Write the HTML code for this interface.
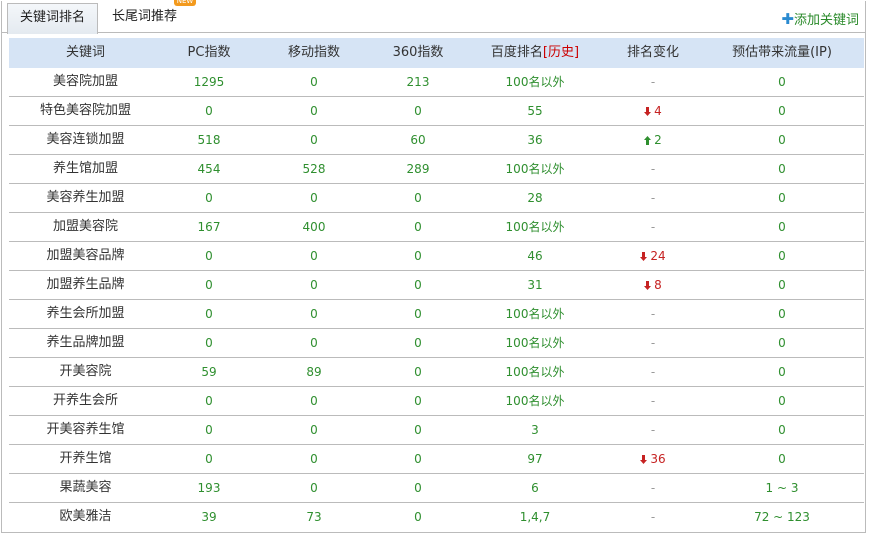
<!DOCTYPE html>
<html><head><meta charset="utf-8"><style>
body{margin:0;background:#fff;font-family:"DejaVu Sans","Noto Sans CJK SC",sans-serif;font-size:12px;color:#333}
.wrap{position:absolute;left:1px;top:1px;width:863px;height:531px;border:1px solid #bbb;border-top:none}
.bar{position:absolute;left:0;top:0;width:863px;height:31px;border-bottom:1px solid #bbb;background:#fff}
.tab1{position:absolute;left:5px;top:2px;width:89px;height:30px;border:1px solid #bbb;border-bottom:none;background:linear-gradient(#f4f7fa,#e4eaf0);text-align:center;line-height:28px;font-size:13px;color:#222}
.tab2{position:absolute;left:110px;top:2px;line-height:28px;color:#222;font-size:13px}
.new{position:absolute;left:172px;top:-4px;width:22px;height:9px;background:#f39a1e;border-radius:3px;color:#fff;font-size:7px;line-height:9px;text-align:center}
.add{position:absolute;right:6px;top:8px;color:#2a8a2a;font-size:13px}
.add b{color:#2a8ad0;font-size:15px;font-weight:bold}
table{position:absolute;left:7px;top:37px;width:855px;border-collapse:collapse}
th{background:#d6e4f5;height:30px;font-weight:normal;color:#333;padding:0;font-size:13px;line-height:30px}
td{height:28px;line-height:28px;border-bottom:1px solid #bbb;text-align:center;padding:0;vertical-align:middle}
td:first-child{font-size:13px}
.g{color:#2f8f2f}.r{color:#c62222}.d{color:#999}
svg{vertical-align:-1px;margin-right:3px}
</style></head><body>
<div class="wrap">
<div class="bar"><div class="tab1">关键词排名</div><div class="tab2">长尾词推荐</div><div class="new">NEW</div><div class="add"><b>✚</b>添加关键词</div></div>
<table>
<colgroup><col style="width:153px"><col style="width:94px"><col style="width:116px"><col style="width:92px"><col style="width:142px"><col style="width:94px"><col></colgroup>
<tr><th>关键词</th><th>PC指数</th><th>移动指数</th><th>360指数</th><th>百度排名<span style="color:#c00">[历史]</span></th><th>排名变化</th><th>预估带来流量(IP)</th></tr>
<tr><td>美容院加盟</td><td class="g">1295</td><td class="g">0</td><td class="g">213</td><td class="g">100名以外</td><td class="d">-</td><td class="g">0</td></tr>
<tr><td>特色美容院加盟</td><td class="g">0</td><td class="g">0</td><td class="g">0</td><td class="g">55</td><td class="r"><svg width="7" height="9"><path d="M2 0h3v5h2L3.5 9 0 5h2z" fill="#c62222"/></svg>4</td><td class="g">0</td></tr>
<tr><td>美容连锁加盟</td><td class="g">518</td><td class="g">0</td><td class="g">60</td><td class="g">36</td><td class="g"><svg width="7" height="9"><path d="M2 9h3V4h2L3.5 0 0 4h2z" fill="#2f8f2f"/></svg>2</td><td class="g">0</td></tr>
<tr><td>养生馆加盟</td><td class="g">454</td><td class="g">528</td><td class="g">289</td><td class="g">100名以外</td><td class="d">-</td><td class="g">0</td></tr>
<tr><td>美容养生加盟</td><td class="g">0</td><td class="g">0</td><td class="g">0</td><td class="g">28</td><td class="d">-</td><td class="g">0</td></tr>
<tr><td>加盟美容院</td><td class="g">167</td><td class="g">400</td><td class="g">0</td><td class="g">100名以外</td><td class="d">-</td><td class="g">0</td></tr>
<tr><td>加盟美容品牌</td><td class="g">0</td><td class="g">0</td><td class="g">0</td><td class="g">46</td><td class="r"><svg width="7" height="9"><path d="M2 0h3v5h2L3.5 9 0 5h2z" fill="#c62222"/></svg>24</td><td class="g">0</td></tr>
<tr><td>加盟养生品牌</td><td class="g">0</td><td class="g">0</td><td class="g">0</td><td class="g">31</td><td class="r"><svg width="7" height="9"><path d="M2 0h3v5h2L3.5 9 0 5h2z" fill="#c62222"/></svg>8</td><td class="g">0</td></tr>
<tr><td>养生会所加盟</td><td class="g">0</td><td class="g">0</td><td class="g">0</td><td class="g">100名以外</td><td class="d">-</td><td class="g">0</td></tr>
<tr><td>养生品牌加盟</td><td class="g">0</td><td class="g">0</td><td class="g">0</td><td class="g">100名以外</td><td class="d">-</td><td class="g">0</td></tr>
<tr><td>开美容院</td><td class="g">59</td><td class="g">89</td><td class="g">0</td><td class="g">100名以外</td><td class="d">-</td><td class="g">0</td></tr>
<tr><td>开养生会所</td><td class="g">0</td><td class="g">0</td><td class="g">0</td><td class="g">100名以外</td><td class="d">-</td><td class="g">0</td></tr>
<tr><td>开美容养生馆</td><td class="g">0</td><td class="g">0</td><td class="g">0</td><td class="g">3</td><td class="d">-</td><td class="g">0</td></tr>
<tr><td>开养生馆</td><td class="g">0</td><td class="g">0</td><td class="g">0</td><td class="g">97</td><td class="r"><svg width="7" height="9"><path d="M2 0h3v5h2L3.5 9 0 5h2z" fill="#c62222"/></svg>36</td><td class="g">0</td></tr>
<tr><td>果蔬美容</td><td class="g">193</td><td class="g">0</td><td class="g">0</td><td class="g">6</td><td class="d">-</td><td class="g">1 ~ 3</td></tr>
<tr><td style="border-bottom:none">欧美雅洁</td><td class="g" style="border-bottom:none">39</td><td class="g" style="border-bottom:none">73</td><td class="g" style="border-bottom:none">0</td><td class="g" style="border-bottom:none">1,4,7</td><td class="d" style="border-bottom:none">-</td><td class="g" style="border-bottom:none">72 ~ 123</td></tr>
</table>
</div>
</body></html>
